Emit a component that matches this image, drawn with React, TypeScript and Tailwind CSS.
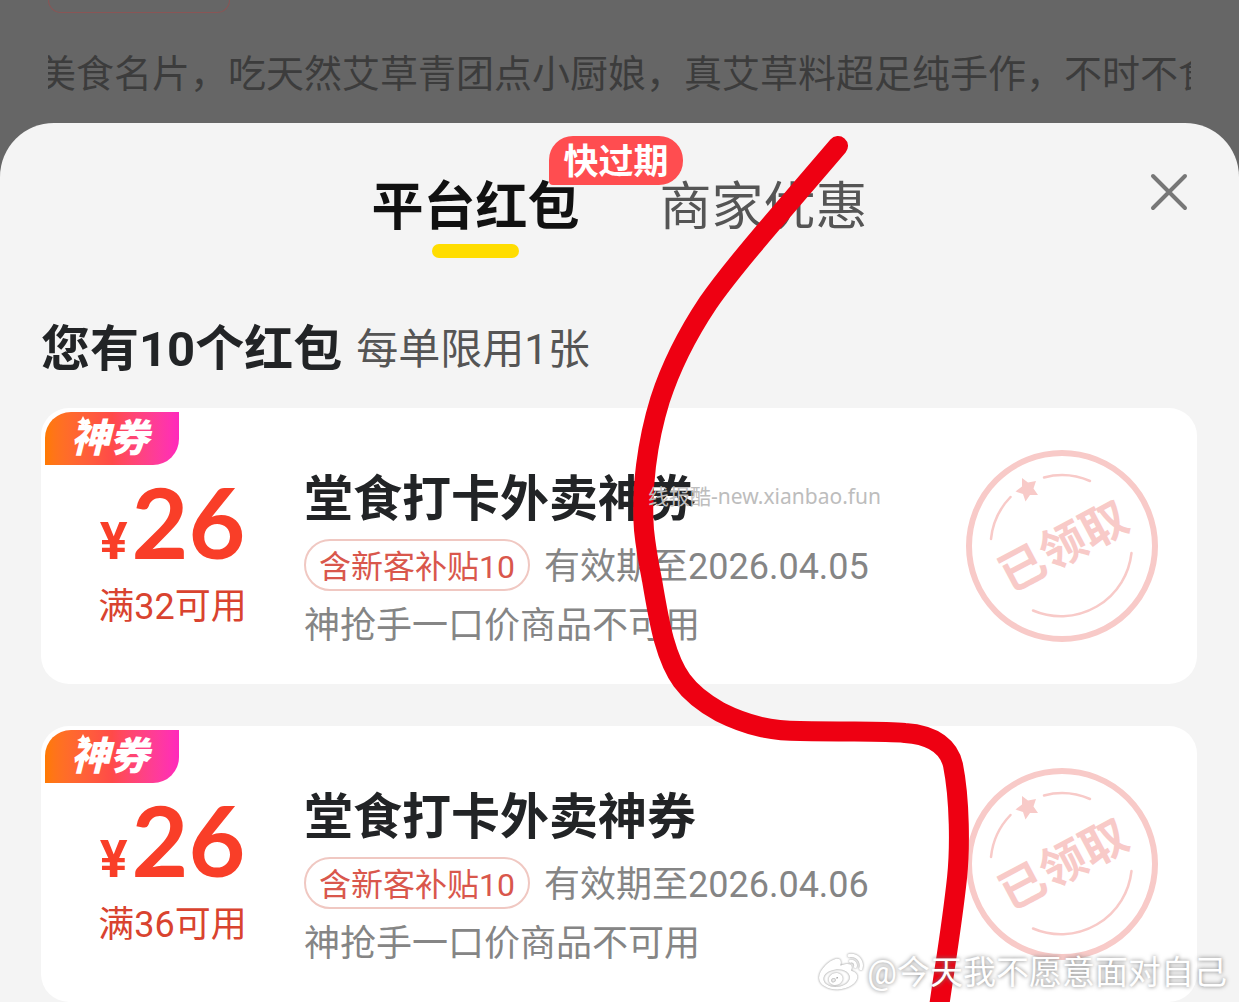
import { FaWeibo } from "react-icons/fa";

const FONT_CLASS = "font-['Roboto','Noto_Sans_CJK_SC',sans-serif]";

const coupons = [
  {
    id: 1,
    amount: 26,
    threshold: "满32可用",
    title: "堂食打卡外卖神券",
    subsidy: "含新客补贴10",
    expires: "有效期至2026.04.05",
    note: "神抢手一口价商品不可用",
  },
  {
    id: 2,
    amount: 26,
    threshold: "满36可用",
    title: "堂食打卡外卖神券",
    subsidy: "含新客补贴10",
    expires: "有效期至2026.04.06",
    note: "神抢手一口价商品不可用",
  },
];

type Coupon = (typeof coupons)[number];

function ClaimedStamp() {
  return (
    <svg viewBox="0 0 192 192" className="size-48 shrink-0 text-[#f8cac8]" fill="none" stroke="currentColor">
      <circle cx="96" cy="96" r="93" strokeWidth="6" />
      <g strokeWidth="2.5" strokeLinecap="round">
        <path d="M25 89A71 71 0 0 1 44.500 47" />
        <path d="M78 27.500A71 71 0 0 1 124 31" />
        <path d="M165.500 103A71 71 0 0 1 67 160.500" />
      </g>
      <path
        d="M56 28l6 4.500 8-1.500-2.500 7.500 4.500 6.500-8 0-4.500 6.500-2.500-7.500-7.500-2.500 6.500-5z"
        fill="currentColor"
        stroke="none"
      />
      <text
        x="97"
        y="113"
        textAnchor="middle"
        transform="rotate(-28 96 96)"
        fill="currentColor"
        stroke="none"
        className="text-[46px] font-bold"
      >
        已领取
      </text>
    </svg>
  );
}

function CouponTag() {
  return (
    <div className="absolute left-1 top-1 flex h-[53px] w-[134px] items-center justify-center rounded-tl-[26px] rounded-br-[26px] bg-linear-to-r from-[#ff7a00] via-[#ff4a48] to-[#ff28bc] pt-0.5 pr-1">
      <span className="text-[39px] leading-[51px] font-black italic text-white">神券</span>
      <svg viewBox="0 0 12 12" className="absolute left-8 top-1 size-3 text-white" fill="currentColor">
        <path d="M6 0l2 4 4 2-4 2-2 4-2-4-4-2 4-2z" />
      </svg>
    </div>
  );
}

function CouponCard({ coupon }: { coupon: Coupon }) {
  return (
    <li className="relative flex items-center rounded-[28px] bg-white pr-[39px]">
      <CouponTag />
      <div className="flex w-[263px] shrink-0 flex-col items-center self-start pt-[74px] text-[#f93e28]">
        <p className="flex items-baseline gap-1 leading-[78px] font-bold">
          <span className="text-[52px]">¥</span>
          <span className="font-['Lato',sans-serif] text-[98px]">{coupon.amount}</span>
        </p>
        <p className="mt-1 text-[36px] leading-[44px] text-[#d9432f]">{coupon.threshold}</p>
      </div>
      <div className="min-w-0 flex-1 pt-16 pb-9">
        <h3 className="text-[49px] leading-[56px] font-bold text-[#222426]">{coupon.title}</h3>
        <div className="mt-[11px] flex items-center gap-[14px] whitespace-nowrap">
          <span className="rounded-full border-2 border-[#f0c8c2] px-[13px] pt-1 text-[32px] leading-[44px] text-[#d9574c]">
            {coupon.subsidy}
          </span>
          <span className="pt-1 text-[36px] leading-[48px] text-[#858585]">{coupon.expires}</span>
        </div>
        <p className="mt-[13px] text-[36px] leading-[44px] text-[#858585]">{coupon.note}</p>
      </div>
      <ClaimedStamp />
    </li>
  );
}

export default function App() {
  return (
    <div lang="zh-CN" className={`relative flex min-h-screen flex-col overflow-hidden bg-[#666666] ${FONT_CLASS}`}>
      <div className="px-12">
        <div className="h-[13px] w-[182px] rounded-b-[14px] border border-t-0 border-[#8a5555]" />
        <div className="mt-9 mb-6 overflow-hidden">
          <p className="-ml-[10px] text-[38px] leading-[50px] whitespace-nowrap text-[#3c3c3c]">
            美食名片，吃天然艾草青团点小厨娘，真艾草料超足纯手作，不时不食
          </p>
        </div>
      </div>

      <main className="flex-1 rounded-t-[54px] bg-[#f4f4f4]">
        <header className="grid grid-cols-[1fr_auto_1fr] items-start pt-[50px]">
          <nav className="col-start-2 flex items-start gap-20 pt-[5px] text-[52px] leading-[60px]">
            <button type="button" className="relative flex flex-col items-center gap-1.5 font-bold text-[#111111]">
              平台红包
              <span className="h-[14px] w-[87px] rounded-full bg-[#ffdd00]" />
              <span className="absolute -top-[42px] left-[178px] rounded-3xl rounded-bl-sm bg-[#ff4d50] px-[14px] pt-[5px] text-[35px] leading-[44px] whitespace-nowrap text-white">
                快过期
              </span>
            </button>
            <button type="button" className="text-[#555555]">
              商家优惠
            </button>
          </nav>
          <button type="button" aria-label="关闭" className="mr-[51px] justify-self-end text-[#777777]">
            <svg viewBox="0 0 38 38" className="size-[38px]" fill="none" stroke="currentColor" strokeWidth="4" strokeLinecap="round">
              <path d="M3 3l32 32M35 3L3 35" />
            </svg>
          </button>
        </header>

        <section className="pr-[42px] pl-[41px]">
          <div className="mt-[62px] flex items-center gap-[14px] leading-[60px]">
            <h2 className="text-[49px] font-bold text-[#222426]">您有10个红包</h2>
            <p className="text-[42px] text-[#555555]">每单限用1张</p>
          </div>
          <ul className="mt-7 flex flex-col gap-[42px]">
            {coupons.map((coupon) => (
              <CouponCard key={coupon.id} coupon={coupon} />
            ))}
          </ul>
        </section>
      </main>

      {/* hand-drawn marker line */}
      <svg
        viewBox="0 0 1239 1002"
        className="pointer-events-none absolute left-0 top-0 w-full"
        fill="none"
        stroke="#ee0012"
        strokeWidth="20"
        strokeLinecap="round"
      >
        <path d="M838 146L772 223C748 251 726 277 708 303C690 330 671 366 660 400C647 442 641 490 644 530C646 550 648 560 652 580C656 604 659 622 664 640C673 672 684 692 720 712C748 726 772 731 800 731C860 732 885 731 905 733C935 735 949 748 953 765C960 800 960 850 957 878C952 925 945 965 938 1014" />
      </svg>

      <p className="pointer-events-none absolute left-[648px] top-[482px] font-['Noto_Sans','Noto_Sans_CJK_SC',sans-serif] text-[21px] leading-7 text-[#bdbdbd]">
        线报酷-new.xianbao.fun
      </p>

      <div className="absolute right-3 bottom-1.5 flex items-center gap-1 text-white">
        <FaWeibo className="size-11 drop-shadow-[0_0_1px_#888888]" />
        <span className="text-[33px] leading-[46px] [text-shadow:0_0_4px_#777777]">@今天我不愿意面对自己</span>
      </div>
    </div>
  );
}
